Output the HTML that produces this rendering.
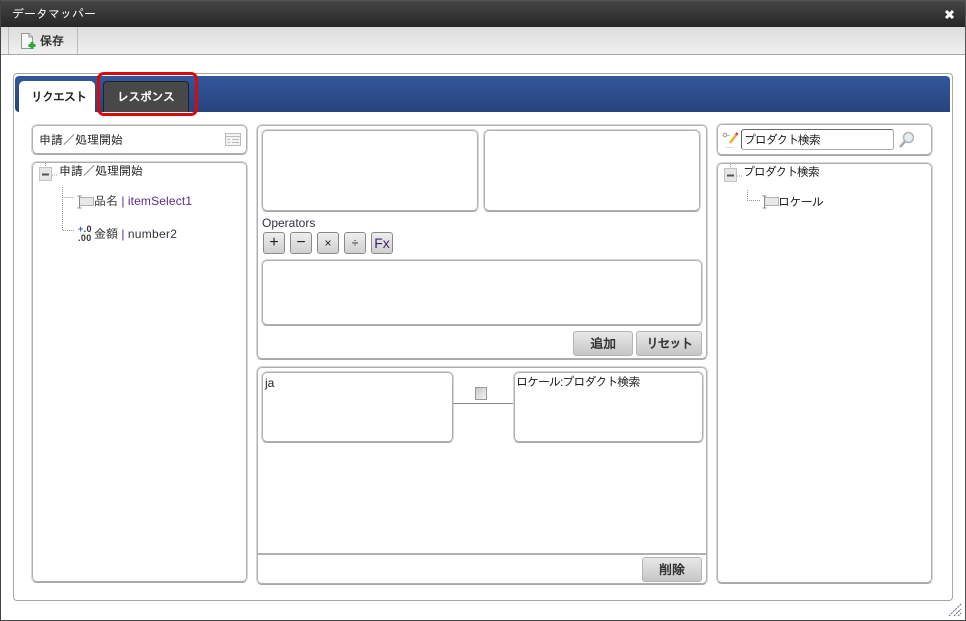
<!DOCTYPE html>
<html lang="ja">
<head>
<meta charset="utf-8">
<style>
html,body{margin:0;padding:0;background:#fff}
#w{position:relative;width:966px;height:621px;overflow:hidden;background:#fff;font-family:"Liberation Sans","IPAGothic","Noto Sans CJK JP",sans-serif;font-size:12px;color:#222}
#w div,#w svg{position:absolute;box-sizing:border-box}
.t{white-space:nowrap;line-height:16px}
.box{background:#fff;border:1px solid #d8d8d8;border-bottom-color:#a8a8a8;border-radius:6px;box-shadow:inset 0 0 0 1px #afafaf}
.btn{background:linear-gradient(#e8e8e8,#c6c6c6);border:1px solid #b4b4b4;border-radius:3px;text-align:center;font-weight:bold;font-size:13px;line-height:23px;color:#333}
.op{width:22px;height:22px;top:232px;background:linear-gradient(#eee,#d0d0d0);border:1px solid #8a8a8a;border-radius:3px;text-align:center;line-height:20px;color:#222;font-size:14px}
.pu{color:#5b2a86}
svg .d{stroke-dasharray:1 1;shape-rendering:crispEdges}
</style>
</head>
<body>
<div id="w">
<!-- title bar -->
<div style="left:0;top:0;width:966px;height:27px;background:linear-gradient(#585858 0,#444 2px,#262626 100%)"></div>
<div class="t" style="left:12px;top:6px;color:#fff;font-size:12px">データマッパー</div>
<svg style="left:944px;top:9px" width="11" height="11" viewBox="0 0 11 11"><path d="M2 2L9 9M9 2L2 9" stroke="#fff" stroke-width="3"/></svg>
<!-- toolbar -->
<div style="left:0;top:27px;width:966px;height:28px;background:linear-gradient(#dcdcdc,#f0f0f0);border-bottom:1px solid #a8a8a8"></div>
<div style="left:8px;top:27px;width:70px;height:27px;border-left:1px solid #bbb;border-right:1px solid #bbb"></div>
<svg style="left:20px;top:32px" width="16" height="18" viewBox="0 0 16 18"><path d="M1.500 1.500H9L12.500 5V16.500H1.500Z" fill="#f6f8f8" stroke="#8a9a9a"/><path d="M9 1.500V5H12.500" fill="#dde" stroke="#8a9a9a"/><path d="M12 10V17M8.500 13.500H15.500" stroke="#2aa83a" stroke-width="3"/></svg>
<div class="t" style="left:40px;top:33px;font-weight:bold;font-size:12px;color:#333">保存</div>
<!-- outer panel -->
<div style="left:13px;top:73px;width:940px;height:528px;border:1px solid #a8a8a8;border-radius:4px;background:#fff"></div>
<div style="left:15px;top:76px;width:935px;height:36px;background:linear-gradient(#33579b,#27437f);border-radius:4px 4px 0 4px"></div>
<div style="left:19px;top:81px;width:76px;height:32px;background:#fff;border-radius:5px 5px 0 0"></div>
<div class="t" style="left:31px;top:89px;font-weight:bold;font-size:12px;color:#222;letter-spacing:-1px">リクエスト</div>
<div style="left:103px;top:81px;width:86px;height:31px;background:#484848;border:1px solid #222;border-bottom:0;border-radius:4px 4px 0 0"></div>
<div class="t" style="left:117px;top:89px;font-weight:bold;font-size:12px;color:#fff;letter-spacing:-.5px">レスポンス</div>
<div style="left:97px;top:72px;width:101px;height:44px;border:3px solid #d80a0a;border-radius:7px"></div>
<!-- left -->
<div class="box" style="left:31px;top:124px;width:217px;height:31px"></div>
<div class="t" style="left:39px;top:132px">申請／処理開始</div>
<svg style="left:225px;top:133px" width="16" height="13" viewBox="0 0 16 13"><rect x=".5" y=".5" width="15" height="12" fill="#f4f4f4" stroke="#bbb"/><path d="M1 3.500H15M2.500 6.500H5M7 6.500H14M2.500 9.500H5M7 9.500H14" stroke="#bbb"/></svg>
<div class="box" style="left:31px;top:161px;width:217px;height:422px"></div>
<svg style="left:38px;top:163px" width="50" height="78" viewBox="0 0 50 78"><path class="d" d="M7.500 0V4M14 12H20M24.500 24V67.500H36M24.500 34.500H36" stroke="#999" fill="none"/><rect x="1.500" y="4.500" width="12" height="13" fill="#e6e6e6" stroke="#c4c4c4"/><path d="M4 11.500H11" stroke="#555" stroke-width="2"/></svg>
<div class="t" style="left:59px;top:163px">申請／処理開始</div>
<svg style="left:76px;top:195px" width="18" height="14" viewBox="0 0 18 14"><rect x="3.500" y="2.500" width="14" height="8" fill="#e8e8e8" stroke="#b4b4b4"/><path d="M3.500 1V13M1.500 1H5.500M1.500 13H5.500" stroke="#888" fill="none"/></svg>
<div class="t" style="left:94px;top:193px;color:#333">品名 <span class="pu">|</span> <span class="pu" style="letter-spacing:.15px">itemSelect1</span></div>
<div class="t" style="left:78px;top:225px;font-size:9px;line-height:9px;font-weight:bold;color:#333;letter-spacing:.4px"><span style="color:#2a5fb0">+</span>.0<br>.00</div>
<div class="t" style="left:94px;top:226px;color:#333">金額 <span class="pu">|</span> <span style="color:#334;letter-spacing:.3px">number2</span></div>
<!-- middle top -->
<div class="box" style="left:256px;top:124px;width:452px;height:236px"></div>
<div class="box" style="left:261px;top:129px;width:218px;height:83px"></div>
<div class="box" style="left:483px;top:129px;width:218px;height:83px"></div>
<div class="t" style="left:262px;top:215px;color:#334">Operators</div>
<div class="op" style="left:263px;font-size:16px">+</div>
<div class="op" style="left:290px;font-size:16px">−</div>
<div class="op" style="left:317px;font-size:12px">×</div>
<div class="op" style="left:344px;font-size:12px">÷</div>
<div class="op" style="left:371px;color:#41206e">Fx</div>
<div class="box" style="left:261px;top:259px;width:442px;height:67px"></div>
<div class="btn" style="left:573px;top:331px;width:60px;height:25px">追加</div>
<div class="btn" style="left:636px;top:331px;width:66px;height:25px;letter-spacing:-1.500px">リセット</div>
<!-- middle bottom -->
<div class="box" style="left:256px;top:366px;width:452px;height:219px"></div>
<div class="box" style="left:261px;top:371px;width:193px;height:72px"></div>
<div class="t" style="left:265px;top:375px">ja</div>
<div style="left:453px;top:403px;width:60px;height:1px;background:#888"></div>
<div style="left:475px;top:387px;width:12px;height:13px;background:linear-gradient(135deg,#c8c8c8,#f4f4f4);border:1px solid #999"></div>
<div class="box" style="left:513px;top:371px;width:191px;height:72px"></div>
<div class="t" style="left:516px;top:374px;letter-spacing:-1px">ロケール:プロダクト検索</div>
<div style="left:258px;top:553px;width:448px;height:2px;background:#b0b0b0"></div>
<div class="btn" style="left:642px;top:557px;width:60px;height:25px">削除</div>
<!-- right -->
<div class="box" style="left:716px;top:123px;width:217px;height:33px"></div>
<svg style="left:722px;top:131px" width="18" height="18" viewBox="0 0 18 18"><circle cx="3" cy="4" r="1.800" fill="#fff" stroke="#999"/><path d="M5 4.500H8" stroke="#bbb"/><path d="M8 12L14 4" stroke="#e8b030" stroke-width="2.500"/><path d="M14 4L15.500 2" stroke="#d04030" stroke-width="2.500"/><path d="M4 16.500H12" stroke="#ddd"/></svg>
<div style="left:741px;top:129px;width:153px;height:21px;background:#fff;border:1px solid #aaa;border-left-color:#666;border-top-color:#666;border-radius:3px"></div>
<div class="t" style="left:744px;top:132px;letter-spacing:-1.200px">プロダクト検索</div>
<svg style="left:898px;top:131px" width="18" height="18" viewBox="0 0 18 18"><circle cx="10.500" cy="6.500" r="5" fill="#e4edf2" stroke="#b4b4b4" stroke-width="1.500"/><path d="M7 10.500L2 16" stroke="#aaa" stroke-width="2.500"/></svg>
<div class="box" style="left:716px;top:162px;width:217px;height:422px"></div>
<svg style="left:723px;top:164px" width="45" height="44" viewBox="0 0 45 44"><path class="d" d="M7.500 0V4M14 12H19M24.500 26V36.500H38" stroke="#999" fill="none"/><rect x="1.500" y="4.500" width="12" height="13" fill="#e6e6e6" stroke="#c4c4c4"/><path d="M4 11.500H11" stroke="#555" stroke-width="2"/></svg>
<div class="t" style="left:743px;top:164px;letter-spacing:-1.200px">プロダクト検索</div>
<svg style="left:761px;top:195px" width="18" height="14" viewBox="0 0 18 14"><rect x="3.500" y="2.500" width="14" height="8" fill="#e8e8e8" stroke="#b4b4b4"/><path d="M3.500 1V13M1.500 1H5.500M1.500 13H5.500" stroke="#888" fill="none"/></svg>
<div class="t" style="left:778px;top:194px;letter-spacing:-.7px">ロケール</div>
<!-- resize grip and window edges -->
<svg style="left:948px;top:603px" width="14" height="14" viewBox="0 0 14 14"><path d="M1 13L13 1M6 13L13 6M10 13L13 10" stroke="#667" stroke-dasharray="2 1" fill="none"/></svg>
<div style="left:0;top:0;width:1px;height:621px;background:#444"></div>
<div style="left:965px;top:0;width:1px;height:621px;background:#555"></div>
<div style="left:0;top:620px;width:966px;height:1px;background:#444"></div>
</div>
</body>
</html>
